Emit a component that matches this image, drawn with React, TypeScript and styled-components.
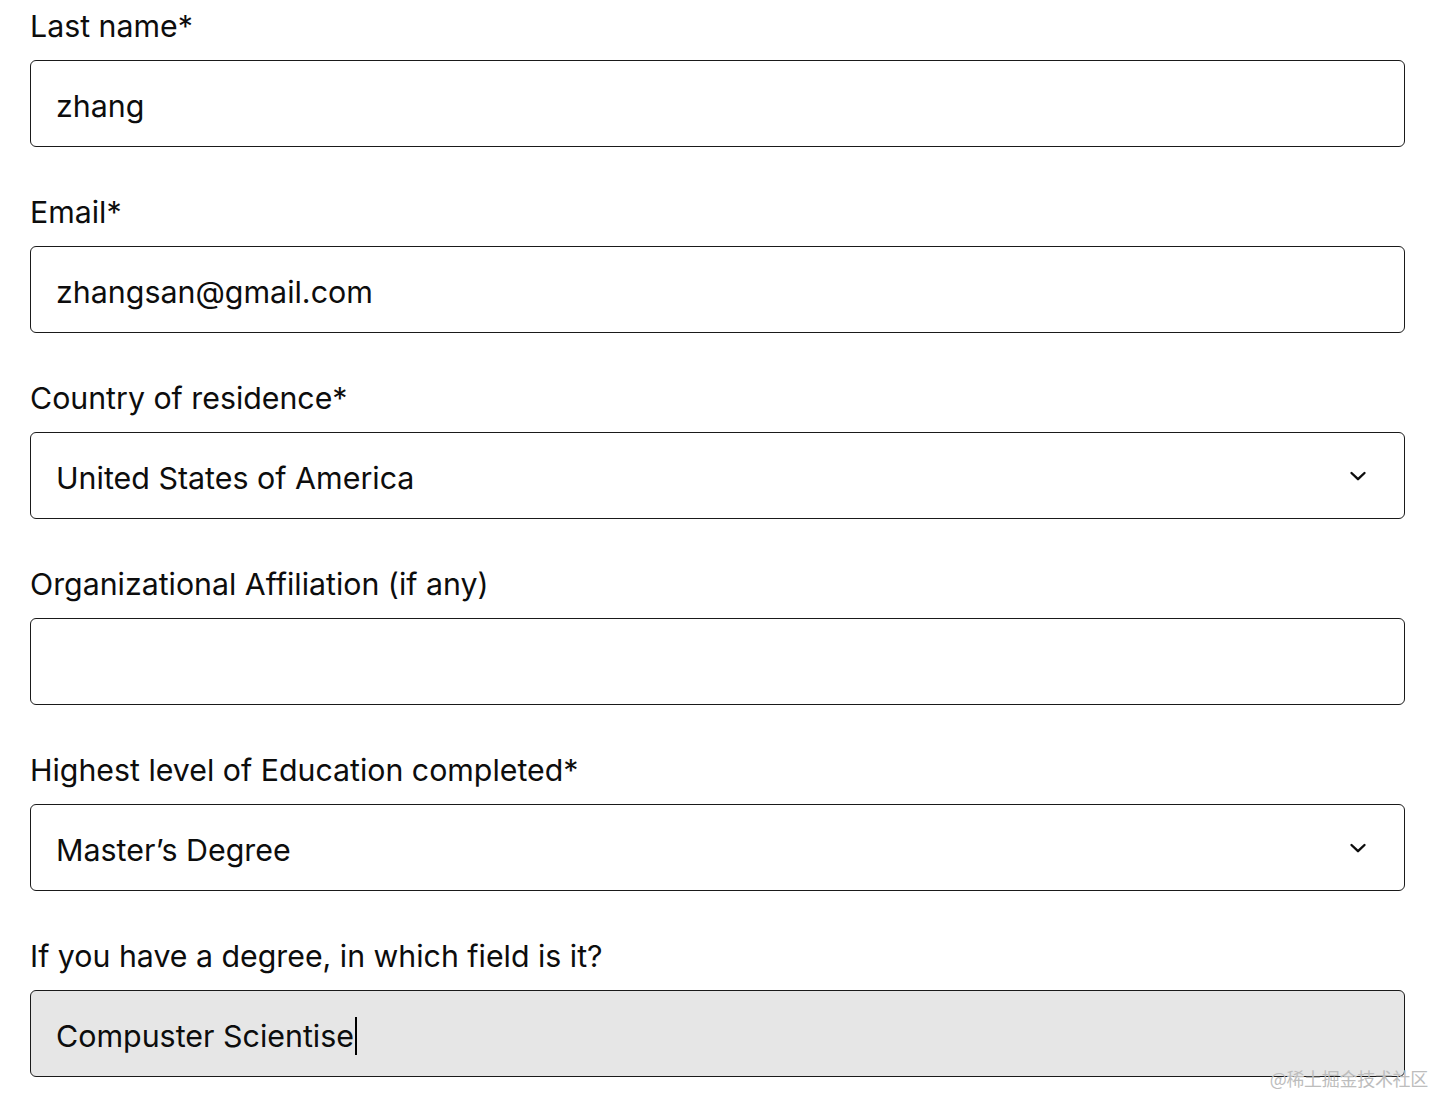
import React from 'react';
import styled, { createGlobalStyle } from 'styled-components';

const GlobalStyle = createGlobalStyle`
  html, body {
    margin: 0;
    padding: 0;
    background: #ffffff;
    font-family: Inter, "Noto Sans", "Liberation Sans", sans-serif;
    color: #0d0d0d;
  }
`;

const Page = styled.div`
  position: relative;
  width: 1436px;
  height: 1096px;
  box-sizing: border-box;
  padding: 8px 31px 0 30px;
  overflow: hidden;
`;

const Form = styled.form`
  display: flex;
  flex-direction: column;
  gap: 47px;
`;

const Field = styled.div`
  display: flex;
  flex-direction: column;
  gap: 16px;
`;

const Label = styled.label`
  font-size: 30.3px;
  line-height: 36px;
  color: #0d0d0d;
`;

const Box = styled.div<{ $filled?: boolean }>`
  position: relative;
  display: flex;
  align-items: center;
  justify-content: space-between;
  height: 87px;
  box-sizing: border-box;
  padding: 5px 36px 0 25px;
  border: 1.5px solid #1a1a1a;
  border-radius: 6px;
  background: ${(p) => (p.$filled ? '#e6e6e6' : '#ffffff')};
  font-size: 30.4px;
`;

const Value = styled.span`
  display: inline-flex;
  align-items: center;
`;

const Caret = styled.span`
  display: inline-block;
  width: 2px;
  height: 38px;
  background: #000;
  margin-left: 1px;
`;

const Chevron = styled.svg`
  width: 20px;
  height: 20px;
  margin-top: -5px;
`;

const Watermark = styled.div`
  position: absolute;
  right: 8px;
  bottom: 5px;
  font-family: "Noto Sans CJK SC", "Noto Sans", sans-serif;
  font-size: 18px;
  color: #bdbdbd;
  letter-spacing: -0.3px;
`;

const ChevronIcon = () => (
  <Chevron viewBox="0 0 20 20" fill="none">
    <path d="M3.5 7 L10 13.2 L16.5 7" stroke="#0d0d0d" strokeWidth="2.4" strokeLinecap="round" strokeLinejoin="round" />
  </Chevron>
);

interface FieldDef {
  label: string;
  value: string;
  select?: boolean;
  focused?: boolean;
}

const fields: FieldDef[] = [
  { label: 'Last name*', value: 'zhang' },
  { label: 'Email*', value: 'zhangsan@gmail.com' },
  { label: 'Country of residence*', value: 'United States of America', select: true },
  { label: 'Organizational Affiliation (if any)', value: '' },
  { label: 'Highest level of Education completed*', value: 'Master\u2019s Degree', select: true },
  { label: 'If you have a degree, in which field is it?', value: 'Compuster Scientise', focused: true },
];

const App: React.FC = () => (
  <>
    <GlobalStyle />
    <Page>
      <Form onSubmit={(e) => e.preventDefault()}>
        {fields.map((f) => (
          <Field key={f.label}>
            <Label>{f.label}</Label>
            <Box $filled={f.focused}>
              <Value>
                {f.value}
                {f.focused && <Caret />}
              </Value>
              {f.select && <ChevronIcon />}
            </Box>
          </Field>
        ))}
      </Form>
      <Watermark>@稀土掘金技术社区</Watermark>
    </Page>
  </>
);

export default App;
